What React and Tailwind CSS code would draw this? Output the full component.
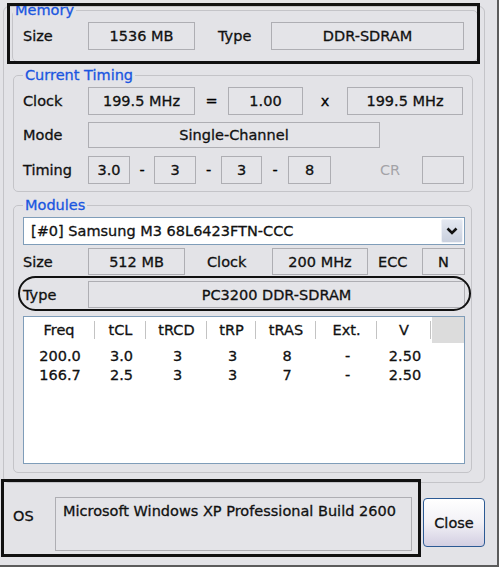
import React from "react";

// Read-only value box used throughout the memory panel
function Box({ className = "", children }) {
  return (
    <div
      className={`flex shrink-0 items-center justify-center border border-[#aeaeb3] bg-[#e4e4e8] text-[#111] ${className}`}
    >
      {children}
    </div>
  );
}

function Label({ className = "", children }) {
  return <div className={`shrink-0 text-[#111] ${className}`}>{children}</div>;
}

function Group({ title, className = "", legendClass = "", children }) {
  return (
    <fieldset className={`rounded-[5px] border border-[#c4c4c8] p-0 ${className}`}>
      <legend className={`px-[2px] leading-[16px] text-[#1a56e0] ${legendClass}`}>{title}</legend>
      {children}
    </fieldset>
  );
}

function HeadCell({ children }) {
  return (
    <div className="flex h-full items-center">
      <div className="flex-1 text-center">{children}</div>
      <div className="h-[18px] w-[2px] border-l border-r border-l-[#c3c3c3] border-r-white" />
    </div>
  );
}

const rows = [
  ["200.0", "3.0", "3", "3", "8", "-", "2.50"],
  ["166.7", "2.5", "3", "3", "7", "-", "2.50"],
];

export default function App() {
  return (
    <div className="h-[570px] w-[502px] bg-white font-['DejaVu_Sans',sans-serif] text-[14.5px] leading-[16px] [-webkit-text-stroke:0.3px]">
      <div className="relative h-[567px] w-[499px] border-b-2 border-r-2 border-[#5c5c5c] bg-[#e3e3e7] pl-[3px] pt-[6px]">
        {/* tab page */}
        <div className="w-[482px] rounded-[6px] border border-[#c4c4c8] pb-[9px]">
          {/* Memory */}
          <Group title="Memory" className="-mt-[5px] ml-[8px] w-[466px]">
            <div className="flex items-center pb-[11px] pl-[10px] pt-[4px]">
              <Label className="w-[65px]">Size</Label>
              <Box className="h-[28px] w-[107px]">1536 MB</Box>
              <Label className="ml-[23px] w-[53px]">Type</Label>
              <Box className="h-[28px] w-[193px]">DDR-SDRAM</Box>
            </div>
          </Group>

          {/* Current Timing */}
          <Group title="Current Timing" className="ml-[9px] mt-[5px] w-[460px]" legendClass="ml-[9px]">
            <div className="flex flex-col gap-[7px] pb-[7px] pl-[9px] pt-[4px]">
              <div className="flex items-center">
                <Label className="w-[65px]">Clock</Label>
                <Box className="h-[28px] w-[107px]">199.5 MHz</Box>
                <div className="w-[33px] text-center">=</div>
                <Box className="h-[28px] w-[75px]">1.00</Box>
                <div className="w-[44px] text-center">x</div>
                <Box className="h-[28px] w-[116px]">199.5 MHz</Box>
              </div>
              <div className="flex items-center">
                <Label className="w-[65px]">Mode</Label>
                <Box className="h-[26px] w-[292px]">Single-Channel</Box>
              </div>
              <div className="mt-[1px] flex items-center">
                <Label className="w-[65px]">Timing</Label>
                <Box className="h-[28px] w-[42px]">3.0</Box>
                <div className="w-[24px] text-center">-</div>
                <Box className="h-[28px] w-[42px]">3</Box>
                <div className="w-[25px] text-center">-</div>
                <Box className="h-[28px] w-[41px]">3</Box>
                <div className="w-[26px] text-center">-</div>
                <Box className="h-[28px] w-[43px]">8</Box>
                <div className="w-[91px] pl-[49px] text-[#a3a3a8] [-webkit-text-stroke:0px]">CR</div>
                <Box className="h-[28px] w-[42px]" />
              </div>
            </div>
          </Group>

          {/* Modules */}
          <Group title="Modules" className="ml-[9px] mt-[5px] w-[459px]" legendClass="ml-[9px]">
            <div className="flex flex-col pb-[8px] pl-[9px] pt-[4px]">
              <div className="flex h-[28px] w-[442px] items-center border border-[#7f9db9] bg-white p-px">
                <div className="flex-1 pl-[6px] text-[#111]">[#0] Samsung M3 68L6423FTN-CCC</div>
                <div className="flex h-full w-[22px] items-center justify-center rounded-[2px] border border-[#eef1f7] bg-gradient-to-b from-[#e4e8f1] to-[#c9d0de]">
                  <svg width="12" height="8" viewBox="0 0 12 8">
                    <polyline points="1.5,1.5 6,6 10.5,1.5" fill="none" stroke="#111" strokeWidth="2.6" />
                  </svg>
                </div>
              </div>

              <div className="mt-[3px] flex items-center">
                <Label className="w-[65px]">Size</Label>
                <Box className="h-[27px] w-[97px]">512 MB</Box>
                <Label className="w-[87px] pl-[22px]">Clock</Label>
                <Box className="h-[27px] w-[96px]">200 MHz</Box>
                <Label className="w-[54px] pl-[10px]">ECC</Label>
                <Box className="h-[27px] w-[43px]">N</Box>
              </div>

              <div className="mt-[6px] flex items-center">
                <Label className="w-[65px]">Type</Label>
                <Box className="h-[27px] w-[377px]">PC3200 DDR-SDRAM</Box>
              </div>

              {/* SPD timing table */}
              <div className="mt-[8px] h-[148px] w-[442px] border border-[#7f9db9] bg-white text-[#111]">
                <div className="grid h-[26px] grid-cols-[72px_51px_61px_49px_60px_61px_54px_32px]">
                  <HeadCell>Freq</HeadCell>
                  <HeadCell>tCL</HeadCell>
                  <HeadCell>tRCD</HeadCell>
                  <HeadCell>tRP</HeadCell>
                  <HeadCell>tRAS</HeadCell>
                  <HeadCell>Ext.</HeadCell>
                  <HeadCell>V</HeadCell>
                  <div className="h-full bg-[#dcdcdc]" />
                </div>
                <div className="pt-[3px]">
                  {rows.map((r) => (
                    <div key={r[0]} className="grid h-[19px] grid-cols-[72px_51px_61px_49px_60px_61px_54px] items-center">
                      {r.map((c, i) => (
                        <div key={i} className="text-center">
                          {c}
                        </div>
                      ))}
                    </div>
                  ))}
                </div>
              </div>
            </div>
          </Group>
        </div>

        {/* OS line and Close */}
        <div className="mt-[14px] flex items-start pl-[10px]">
          <Label className="mt-[11px] w-[42px]">OS</Label>
          <div className="h-[54px] w-[357px] shrink-0 border border-[#aeaeb3] bg-[#e4e4e8] pl-[7px] pt-[5px] text-[#111]">
            Microsoft Windows XP Professional Build 2600
          </div>
          <button className="ml-[11px] mt-px flex h-[49px] w-[62px] items-center justify-center rounded-[4px] border border-[#2c5a94] bg-gradient-to-b from-white via-[#f2f1f6] to-[#d3cfe2] text-[#111]">
            Close
          </button>
        </div>

        {/* hand-drawn callouts */}
        <div className="pointer-events-none absolute left-[7px] top-[3px] h-[61px] w-[473px] border-[3px] border-[#111]" />
        <div className="pointer-events-none absolute left-[18px] top-[276px] h-[35px] w-[453px] rounded-full border-[2px] border-[#111]" />
        <div className="pointer-events-none absolute left-[1px] top-[479px] h-[78px] w-[420px] border-[3px] border-[#111]" />
      </div>
    </div>
  );
}
